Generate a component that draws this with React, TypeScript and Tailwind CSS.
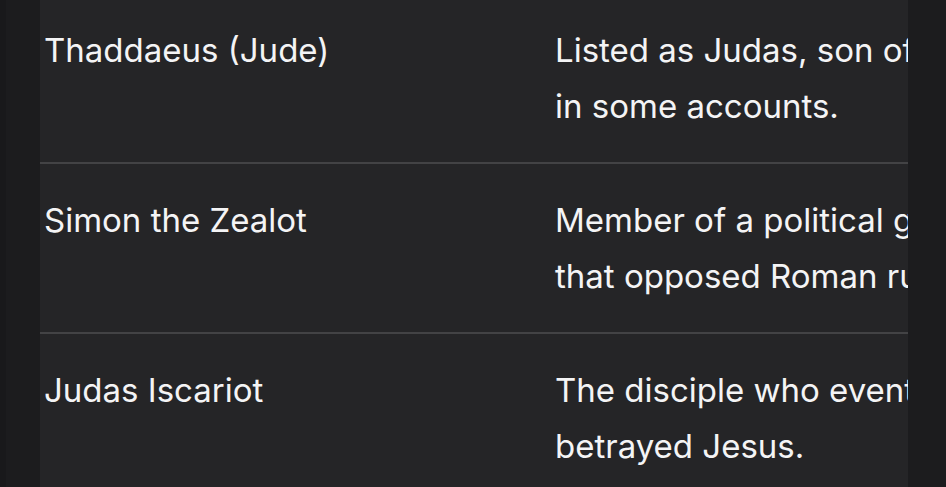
const rows = [
  {
    name: "Thaddaeus (Jude)",
    note: "Listed as Judas, son of James in some accounts.",
  },
  {
    name: "Simon the Zealot",
    note: "Member of a political group that opposed Roman rule.",
  },
  {
    name: "Judas Iscariot",
    note: "The disciple who eventually betrayed Jesus.",
  },
];

export default function App() {
  return (
    <div className="flex h-[487px] w-[946px] overflow-hidden bg-[#1c1c1e] font-['Inter',sans-serif] text-[#f4f4f5]">
      {/* left gutter */}
      <div className="flex w-[40px] shrink-0">
        <div className="w-[6px] bg-[#19191b]" />
        <div className="flex-1 bg-[#1c1c1e]" />
      </div>

      {/* table panel, scrolled so first row is partly cut */}
      <div className="w-[868px] shrink-0 overflow-hidden bg-[#252527]">
        <div className="-mt-[6px] w-[1100px]">
          {rows.map((row, i) => (
            <div key={row.name}>
              <div className="flex py-7 text-[33px] leading-[56px]">
                <div className="w-[515px] shrink-0 pl-[4px]">{row.name}</div>
                <div className="w-[475px] shrink-0">{row.note}</div>
              </div>
              {i < rows.length - 1 && (
                <div className="h-[2px] w-[868px] bg-[#434345]" />
              )}
            </div>
          ))}
        </div>
      </div>

      {/* right gutter */}
      <div className="flex-1 bg-[#1c1c1e]" />
    </div>
  );
}
